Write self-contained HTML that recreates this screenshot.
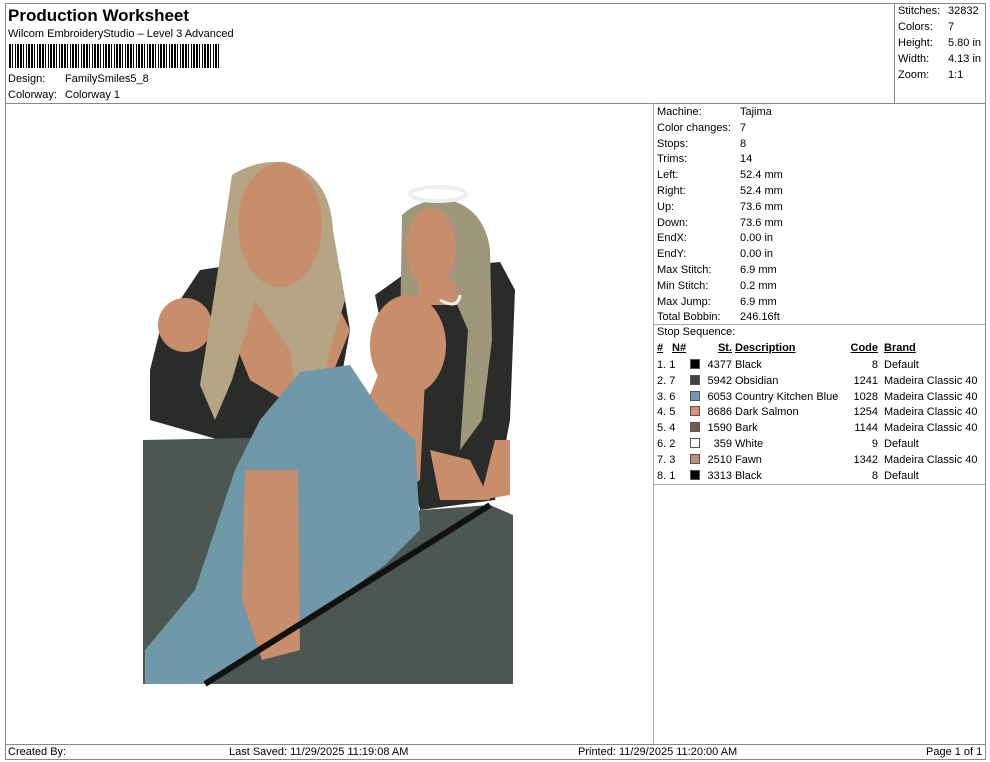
<!DOCTYPE html>
<html><head><style>
*{margin:0;padding:0;box-sizing:border-box}
body{width:990px;height:762px;background:#fff;font-family:"Liberation Sans",sans-serif;font-size:11px;color:#000;position:relative;overflow:hidden}
.a{position:absolute;white-space:nowrap;line-height:13px}
.ln{position:absolute;background:#888}
.r{text-align:right}
u{text-decoration:underline}
.sw{position:absolute;width:10px;height:10px;border:1px solid #555}
</style></head><body>
<div class="ln" style="left:5px;top:3px;width:980px;height:1px"></div>
<div class="ln" style="left:5px;top:3px;width:1px;height:757px"></div>
<div class="ln" style="left:985px;top:3px;width:1px;height:757px"></div>
<div class="ln" style="left:5px;top:759px;width:981px;height:1px"></div>
<div class="ln" style="left:5px;top:103px;width:980px;height:1px"></div>
<div class="ln" style="left:894px;top:3px;width:1px;height:100px"></div>
<div class="ln" style="left:653px;top:103px;width:1px;height:641px;background:#aaa"></div>
<div class="ln" style="left:653px;top:324px;width:332px;height:1px;background:#aaa"></div>
<div class="ln" style="left:653px;top:484px;width:332px;height:1px;background:#aaa"></div>
<div class="ln" style="left:5px;top:744px;width:980px;height:1px"></div>

<div class="a" style="left:8px;top:6px;font-size:17px;font-weight:bold;line-height:19px">Production Worksheet</div>
<div class="a" style="left:8px;top:28px">Wilcom EmbroideryStudio – Level 3 Advanced</div>
<div class="a" style="left:9px;top:44px;width:210px;height:24px;background:repeating-linear-gradient(90deg,#000 0 2px,#fff 2px 3px,#000 3px 4px,#fff 4px 6px,#000 6px 7px,#fff 7px 8px,#000 8px 10px,#fff 10px 11px)"></div>
<div class="a" style="left:8px;top:73px">Design:</div><div class="a" style="left:65px;top:73px">FamilySmiles5_8</div>
<div class="a" style="left:8px;top:89px">Colorway:</div><div class="a" style="left:65px;top:89px">Colorway 1</div>

<div class="a" style="left:898px;top:5px">Stitches:</div><div class="a" style="left:948px;top:5px">32832</div>
<div class="a" style="left:898px;top:21px">Colors:</div><div class="a" style="left:948px;top:21px">7</div>
<div class="a" style="left:898px;top:37px">Height:</div><div class="a" style="left:948px;top:37px">5.80 in</div>
<div class="a" style="left:898px;top:53px">Width:</div><div class="a" style="left:948px;top:53px">4.13 in</div>
<div class="a" style="left:898px;top:69px">Zoom:</div><div class="a" style="left:948px;top:69px">1:1</div>

<div class="a" style="left:657px;top:105px;line-height:15.8px">Machine:<br>Color changes:<br>Stops:<br>Trims:<br>Left:<br>Right:<br>Up:<br>Down:<br>EndX:<br>EndY:<br>Max Stitch:<br>Min Stitch:<br>Max Jump:<br>Total Bobbin:</div>
<div class="a" style="left:740px;top:105px;line-height:15.8px">Tajima<br>7<br>8<br>14<br>52.4 mm<br>52.4 mm<br>73.6 mm<br>73.6 mm<br>0.00 in<br>0.00 in<br>6.9 mm<br>0.2 mm<br>6.9 mm<br>246.16ft</div>

<div class="a" style="left:657px;top:326px">Stop Sequence:</div>
<div class="a" style="left:657px;top:342px;font-weight:bold"><u>#</u></div>
<div class="a" style="left:672px;top:342px;font-weight:bold"><u>N#</u></div>
<div class="a r" style="left:700px;width:32px;top:342px;font-weight:bold"><u>St.</u></div>
<div class="a" style="left:735px;top:342px;font-weight:bold"><u>Description</u></div>
<div class="a r" style="left:840px;width:38px;top:342px;font-weight:bold"><u>Code</u></div>
<div class="a" style="left:884px;top:342px;font-weight:bold"><u>Brand</u></div>
<div class="a" style="left:657px;top:358px;line-height:15.8px">1.&nbsp;1<br>2.&nbsp;7<br>3.&nbsp;6<br>4.&nbsp;5<br>5.&nbsp;4<br>6.&nbsp;2<br>7.&nbsp;3<br>8.&nbsp;1</div>
<div class="a r" style="left:700px;width:32px;top:358px;line-height:15.8px">4377<br>5942<br>6053<br>8686<br>1590<br>359<br>2510<br>3313</div>
<div class="a" style="left:735px;top:358px;line-height:15.8px">Black<br>Obsidian<br>Country Kitchen Blue<br>Dark Salmon<br>Bark<br>White<br>Fawn<br>Black</div>
<div class="a r" style="left:840px;width:38px;top:358px;line-height:15.8px">8<br>1241<br>1028<br>1254<br>1144<br>9<br>1342<br>8</div>
<div class="a" style="left:884px;top:358px;line-height:15.8px">Default<br>Madeira Classic 40<br>Madeira Classic 40<br>Madeira Classic 40<br>Madeira Classic 40<br>Default<br>Madeira Classic 40<br>Default</div>
<div class="sw" style="left:690px;top:359px;background:#000"></div>
<div class="sw" style="left:690px;top:375px;background:#3a4444"></div>
<div class="sw" style="left:690px;top:391px;background:#6f98b4"></div>
<div class="sw" style="left:690px;top:406px;background:#e08a78"></div>
<div class="sw" style="left:690px;top:422px;background:#6e5e4a"></div>
<div class="sw" style="left:690px;top:438px;background:#fff"></div>
<div class="sw" style="left:690px;top:454px;background:#b99078"></div>
<div class="sw" style="left:690px;top:470px;background:#000"></div>

<svg class="a" style="left:0;top:0" width="990" height="762">
<!-- dark tops -->
<polygon points="160,330 200,270 300,255 340,270 350,330 330,440 220,440 150,420 150,370" fill="#2a2c2a"/>
<polygon points="375,295 410,270 500,262 515,290 510,420 495,500 420,510 400,420" fill="#2a2c2a"/>
<!-- grey table -->
<polygon points="143,440 300,437 300,684 143,684" fill="#4c5652"/>
<polygon points="395,512 490,505 513,515 513,684 205,684 300,600" fill="#4c5652"/>
<!-- left woman skin body -->
<polygon points="240,270 320,270 350,330 330,380 300,410 250,380 230,330" fill="#c88e6c"/>
<ellipse cx="185" cy="325" rx="27" ry="27" fill="#c88e6c"/>
<!-- hair left -->
<path d="M232,175 Q255,160 285,162 Q330,175 333,230 L345,300 L330,350 L320,400 L300,420 L290,350 L255,300 L232,380 L215,420 L200,385 L215,290 Z" fill="#b5a585"/>
<ellipse cx="280" cy="225" rx="42" ry="62" fill="#c88e6c"/>
<!-- right woman -->
<path d="M402,215 Q420,198 450,200 Q485,210 490,250 L492,340 L482,420 L460,450 L468,330 L455,300 L412,300 L400,330 Z" fill="#9e977a"/>
<ellipse cx="431" cy="248" rx="25" ry="40" fill="#c88e6c"/>
<polygon points="418,280 455,280 458,305 420,305" fill="#c88e6c"/>
<ellipse cx="438" cy="194" rx="28" ry="7" fill="none" stroke="#eee" stroke-width="4"/>
<path d="M440,300 Q458,310 460,295" fill="none" stroke="#eee" stroke-width="3"/>
<!-- middle head -->
<ellipse cx="408" cy="345" rx="38" ry="50" fill="#c88e6c"/>
<polygon points="380,370 425,380 420,480 390,500 360,420" fill="#c88e6c"/>
<polygon points="430,450 470,460 490,500 440,500" fill="#c88e6c"/>
<polygon points="495,440 510,440 510,495 480,500" fill="#c88e6c"/>
<!-- blue shirt -->
<polygon points="145,650 195,590 235,470 260,420 300,372 350,365 380,410 415,440 420,530 385,565 300,625 205,684 145,684" fill="#6f98a8"/>
<polygon points="245,470 298,470 300,650 262,660 242,600" fill="#c88e6c"/>
<!-- black bar -->
<line x1="205" y1="684" x2="490" y2="505" stroke="#111" stroke-width="6"/>
</svg>

<div class="a" style="left:8px;top:746px">Created By:</div>
<div class="a" style="left:229px;top:746px">Last Saved: 11/29/2025 11:19:08 AM</div>
<div class="a" style="left:578px;top:746px">Printed: 11/29/2025 11:20:00 AM</div>
<div class="a" style="left:926px;top:746px">Page 1 of 1</div>
</body></html>
